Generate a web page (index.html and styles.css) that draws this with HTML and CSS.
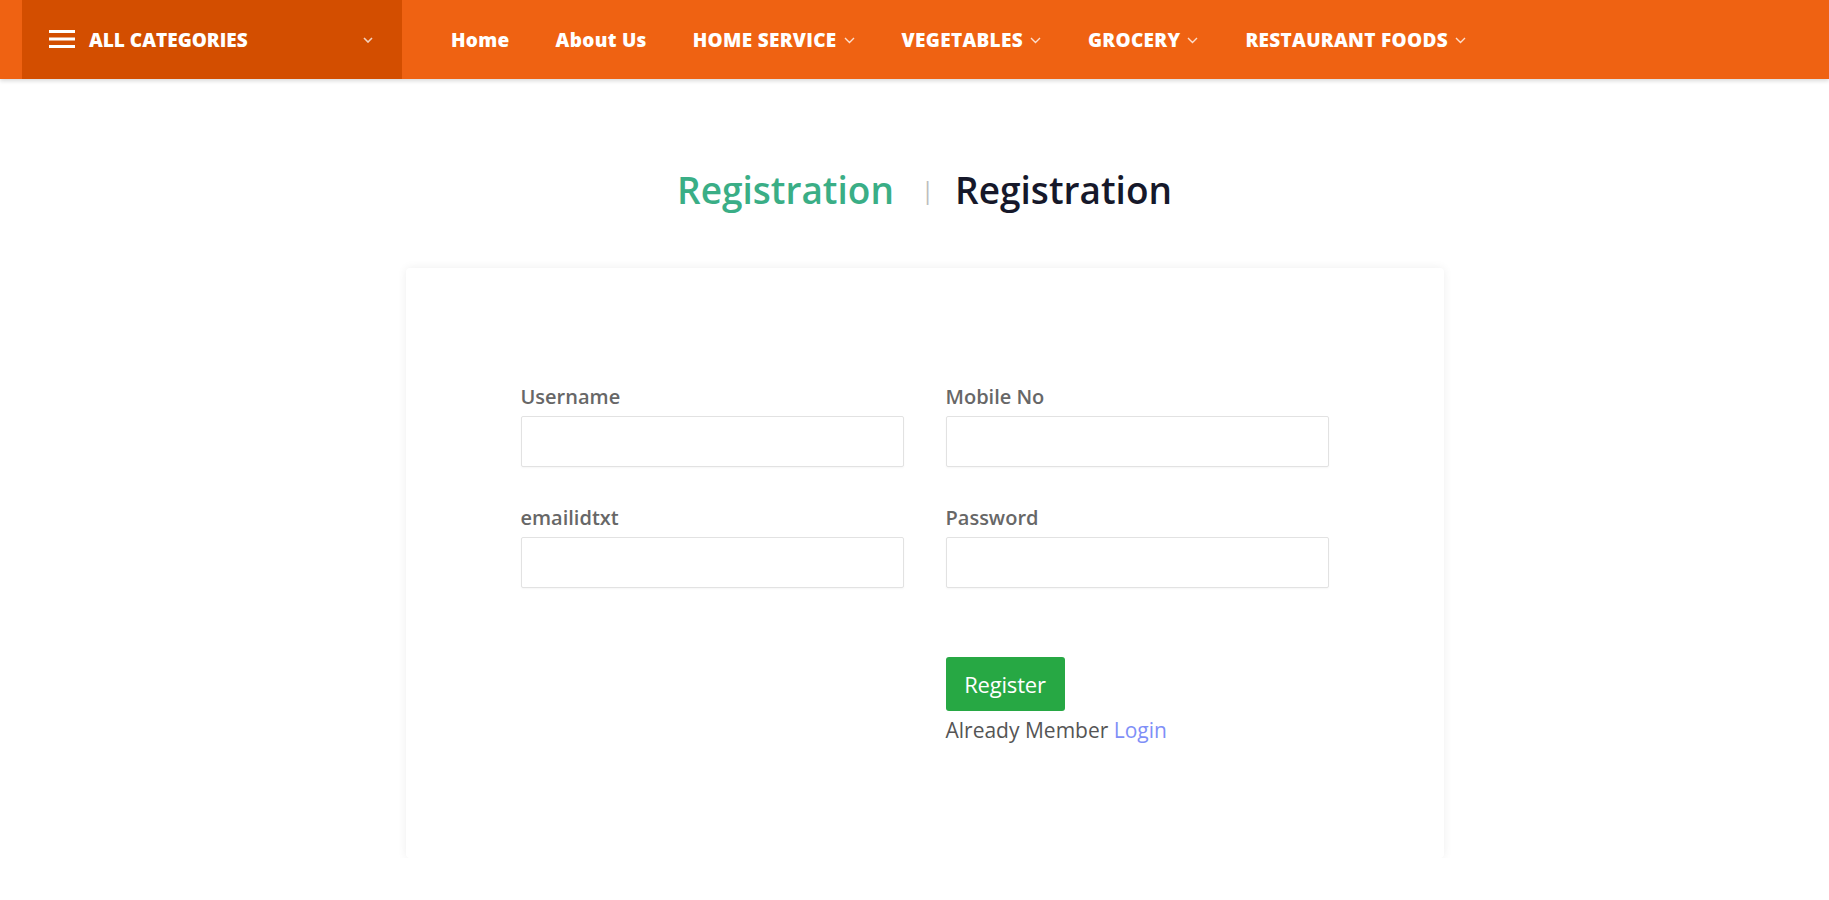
FILE: index.html
```html
<!DOCTYPE html>
<html lang="en">
<head>
<meta charset="utf-8">
<title>Registration</title>
<link rel="stylesheet" href="styles.css">
</head>
<body>
<header class="navbar">
  <div class="cat-menu">
    <svg class="burger" width="26" height="18" viewBox="0 0 26 18"><rect x="0" y="0" width="26" height="3" fill="#fff"/><rect x="0" y="7.5" width="26" height="3" fill="#fff"/><rect x="0" y="15" width="26" height="3" fill="#fff"/></svg>
    <span class="cat-label">ALL CATEGORIES</span>
    <svg class="cat-chev" width="10" height="6" viewBox="0 0 10 6"><path d="M1 1 L5 5 L9 1" fill="none" stroke="rgba(255,255,255,0.75)" stroke-width="1.6"/></svg>
  </div>
  <nav class="menu">
    <a class="menu-item" href="#">Home</a>
    <a class="menu-item" href="#">About Us</a>
    <a class="menu-item" href="#">HOME SERVICE<svg class="chev" width="11" height="7" viewBox="0 0 11 7"><path d="M1 1 L5.5 5.5 L10 1" fill="none" stroke="rgba(255,255,255,0.8)" stroke-width="1.4"/></svg></a>
    <a class="menu-item" href="#">VEGETABLES<svg class="chev" width="11" height="7" viewBox="0 0 11 7"><path d="M1 1 L5.5 5.5 L10 1" fill="none" stroke="rgba(255,255,255,0.8)" stroke-width="1.4"/></svg></a>
    <a class="menu-item" href="#">GROCERY<svg class="chev" width="11" height="7" viewBox="0 0 11 7"><path d="M1 1 L5.5 5.5 L10 1" fill="none" stroke="rgba(255,255,255,0.8)" stroke-width="1.4"/></svg></a>
    <a class="menu-item" href="#">RESTAURANT FOODS<svg class="chev" width="11" height="7" viewBox="0 0 11 7"><path d="M1 1 L5.5 5.5 L10 1" fill="none" stroke="rgba(255,255,255,0.8)" stroke-width="1.4"/></svg></a>
  </nav>
</header>

<main class="page">
  <h1 class="crumb">
    <span class="crumb-green">Registration</span>
    <span class="crumb-sep">|</span>
    <span class="crumb-dark">Registration</span>
  </h1>

  <section class="card">
    <form class="reg-form">
      <div class="field">
        <label class="label">Username</label>
        <input class="input" type="text">
      </div>
      <div class="field">
        <label class="label">Mobile No</label>
        <input class="input" type="text">
      </div>
      <div class="field">
        <label class="label">emailidtxt</label>
        <input class="input" type="text">
      </div>
      <div class="field">
        <label class="label">Password</label>
        <input class="input" type="password">
      </div>
      <div class="field"></div>
      <div class="actions">
        <button class="btn" type="button">Register</button>
        <p class="already">Already Member <a class="login" href="#">Login</a></p>
      </div>
    </form>
  </section>
</main>
</body>
</html>
```

FILE: styles.css
```css
* { box-sizing: border-box; }

body {
  margin: 0;
  background: #ffffff;
  font-family: "Open Sans", "Liberation Sans", sans-serif;
  color: #333;
}

.navbar {
  height: 79px;
  background: #ef6212;
  display: flex;
  align-items: stretch;
  padding-left: 22px;
  box-shadow: 0 2px 4px rgba(0, 0, 0, 0.15);
}

.cat-menu {
  width: 380px;
  background: #d34e00;
  display: flex;
  align-items: center;
  padding-left: 27px;
  padding-right: 29px;
}

.burger { flex: none; margin-top: -1px; }

.cat-label {
  color: #fff;
  font-weight: 800;
  font-size: 19px;
  letter-spacing: 0;
  margin-left: 14px;
  flex: 1;
}

.cat-chev { flex: none; }

.menu {
  display: flex;
  align-items: center;
  padding-left: 26px;
}

.menu-item {
  color: #fff;
  text-decoration: none;
  font-weight: 800;
  font-size: 19px;
  letter-spacing: 0.3px;
  padding: 0 23px;
  display: flex;
  align-items: center;
  gap: 7px;
}

.menu-item:nth-child(n+4) { margin-left: 1px; }

.chev { margin-top: 2px; }

.page {
  width: 1058px;
  margin: 0 auto;
  padding-left: 20px;
}

.crumb {
  margin: 89px 0 0;
  height: 44px;
  display: flex;
  justify-content: center;
  align-items: center;
  font-size: 37px;
  font-weight: 600;
  line-height: 44px;
}

.crumb-green { color: #3aae86; }

.crumb-sep {
  color: #bdbdbd;
  font-size: 24px;
  font-weight: 400;
  margin: 0 21px 0 27px;
}

.crumb-dark { color: #16182a; }

.card {
  margin-top: 56px;
  background: #fff;
  border-radius: 4px;
  box-shadow: 0 0 10px rgba(0, 0, 0, 0.07);
  padding: 117px 115px 116px;
}

.reg-form {
  display: grid;
  grid-template-columns: 383px 383px;
  column-gap: 42px;
  row-gap: 39px;
}

.field {
  display: flex;
  flex-direction: column;
}

.label {
  font-size: 20px;
  font-weight: 600;
  color: #676767;
  line-height: 24px;
  margin-bottom: 7px;
}

.input {
  height: 51px;
  border: 1px solid #e2e2e2;
  border-radius: 2px;
  box-shadow: 0 1px 2px rgba(0, 0, 0, 0.04);
  background: #fff;
}

.actions {
  margin-top: 30px;
  display: flex;
  flex-direction: column;
  align-items: flex-start;
}

.btn {
  width: 119px;
  height: 54px;
  background: #27a844;
  color: #fff;
  border: none;
  border-radius: 3px;
  font-family: "Open Sans", "Liberation Sans", sans-serif;
  font-size: 22px;
  letter-spacing: -0.2px;
  padding: 0;
}

.already {
  margin: 7px 0 0;
  font-size: 21px;
  line-height: 24px;
  color: #555;
  font-weight: 500;
}

.login {
  color: #7f8ff7;
  text-decoration: none;
  font-weight: 400;
}
```
